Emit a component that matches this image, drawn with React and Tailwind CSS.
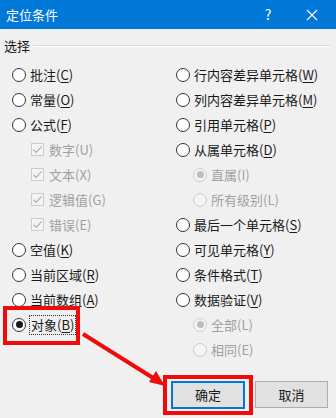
import React from 'react'

const FONT = { fontFamily: '"Microsoft YaHei", "Noto Sans CJK SC", "Noto Sans", sans-serif' }

const Label = ({ text, hot, disabled }) => (
    <span className={disabled ? 'text-[#a0a0a0]' : 'text-[#1a1a1a]'}>
        {text}(<span className={disabled ? '' : 'underline underline-offset-2'}>{hot}</span>)
    </span>
)

const Radio = ({ checked, disabled }) => (
    <span className={`flex items-center justify-center w-[14px] h-[14px] rounded-full border shrink-0 ${disabled ? 'border-[#cccccc] bg-[#f4f4f4]' : 'border-[#333333] bg-white'}`}>
        {checked && <span className={`w-[7px] h-[7px] rounded-full ${disabled ? 'bg-[#bdbdbd]' : 'bg-[#1a1a1a]'}`} />}
    </span>
)

const Check = () => (
    <span className="flex items-center justify-center w-[13px] h-[13px] border border-[#cccccc] bg-[#f4f4f4] shrink-0">
        <svg width="11" height="11" viewBox="0 0 11 11">
            <path d="M1.5 5.8 L4.3 8.5 L9.6 2.4" fill="none" stroke="#b0b0b0" strokeWidth="1.2" />
        </svg>
    </span>
)

const left = [
    { type: 'radio', text: '批注', hot: 'C' },
    { type: 'radio', text: '常量', hot: 'O' },
    { type: 'radio', text: '公式', hot: 'F' },
    { type: 'check', text: '数字', hot: 'U' },
    { type: 'check', text: '文本', hot: 'X' },
    { type: 'check', text: '逻辑值', hot: 'G' },
    { type: 'check', text: '错误', hot: 'E' },
    { type: 'radio', text: '空值', hot: 'K' },
    { type: 'radio', text: '当前区域', hot: 'R' },
    { type: 'radio', text: '当前数组', hot: 'A' },
    { type: 'radio', text: '对象', hot: 'B', checked: true, focus: true },
]

const right = [
    { type: 'radio', text: '行内容差异单元格', hot: 'W' },
    { type: 'radio', text: '列内容差异单元格', hot: 'M' },
    { type: 'radio', text: '引用单元格', hot: 'P' },
    { type: 'radio', text: '从属单元格', hot: 'D' },
    { type: 'sub', text: '直属', hot: 'I', checked: true },
    { type: 'sub', text: '所有级别', hot: 'L' },
    { type: 'radio', text: '最后一个单元格', hot: 'S' },
    { type: 'radio', text: '可见单元格', hot: 'Y' },
    { type: 'radio', text: '条件格式', hot: 'T' },
    { type: 'radio', text: '数据验证', hot: 'V' },
    { type: 'sub', text: '全部', hot: 'L', checked: true },
    { type: 'sub', text: '相同', hot: 'E' },
]

const Row = ({ item }) => {
    if (item.type === 'check') {
        return (
            <div className="h-[25px] flex items-center gap-[5px] pl-[19px]">
                <Check />
                <Label text={item.text} hot={item.hot} disabled />
            </div>
        )
    }
    const disabled = item.type === 'sub'
    return (
        <div className={`h-[25px] flex items-center gap-[3px] ${disabled ? 'pl-[17px]' : ''}`}>
            <Radio checked={item.checked} disabled={disabled} />
            <span className={item.focus ? 'border border-dotted border-[#333333] px-[1px] leading-[18px]' : 'px-[1px]'}>
                <Label text={item.text} hot={item.hot} disabled={disabled} />
            </span>
        </div>
    )
}

export default function App() {
    return (
        <div className="relative w-[336px] h-[418px] bg-[#f0f0f0] overflow-hidden text-[13px]" style={FONT}>
            {/* title bar */}
            <div className="h-[29px] bg-[#0078d7] flex items-center pl-[6px] text-white text-[13px]">
                <span className="flex-1">定位条件</span>
                <span className="w-[20px] text-center text-[14px] mr-[24px]">?</span>
                <span className="w-[20px] flex justify-center mr-[14px]">
                    <svg width="12" height="12" viewBox="0 0 12 12">
                        <path d="M1 1 L11 11 M11 1 L1 11" stroke="white" strokeWidth="1.1" />
                    </svg>
                </span>
            </div>

            {/* group header */}
            <div className="flex items-center h-[18px] mt-[8px] pl-[4px] pr-[6px]">
                <span className="text-[#1a1a1a] mr-[3px]">选择</span>
                <div className="flex-1 border-t border-[#d9d9d9] border-b border-b-white" />
            </div>

            <div className="flex mt-[7px]">
                <div className="w-[176px] pl-[12px]">
                    {left.map((it, i) => <Row key={i} item={it} />)}
                </div>
                <div className="flex-1">
                    {right.map((it, i) => <Row key={i} item={it} />)}
                </div>
            </div>

            {/* buttons */}
            <div className="flex justify-end gap-[10px] pr-[8px] mt-[19px]">
                <button className="w-[74px] h-[28px] bg-[#e1e1e1] border-2 border-[#0078d7] text-[#1a1a1a]">确定</button>
                <button className="w-[73px] h-[27px] bg-[#e1e1e1] border border-[#adadad] text-[#1a1a1a]">取消</button>
            </div>

            {/* annotations */}
            <div className="absolute left-[3px] top-[306px] w-[77px] h-[39px] border-[4px] border-[#f00a0a]" />
            <div className="absolute left-[163px] top-[375px] w-[90px] h-[40px] border-[4px] border-[#f00a0a]" />
            <svg className="absolute left-0 top-0" width="336" height="418" viewBox="0 0 336 418">
                <line x1="83" y1="334" x2="158" y2="381" stroke="#f00a0a" strokeWidth="4" />
                <path d="M165 386 L149 382 L156 371 Z" fill="#f00a0a" />
            </svg>
        </div>
    )
}
